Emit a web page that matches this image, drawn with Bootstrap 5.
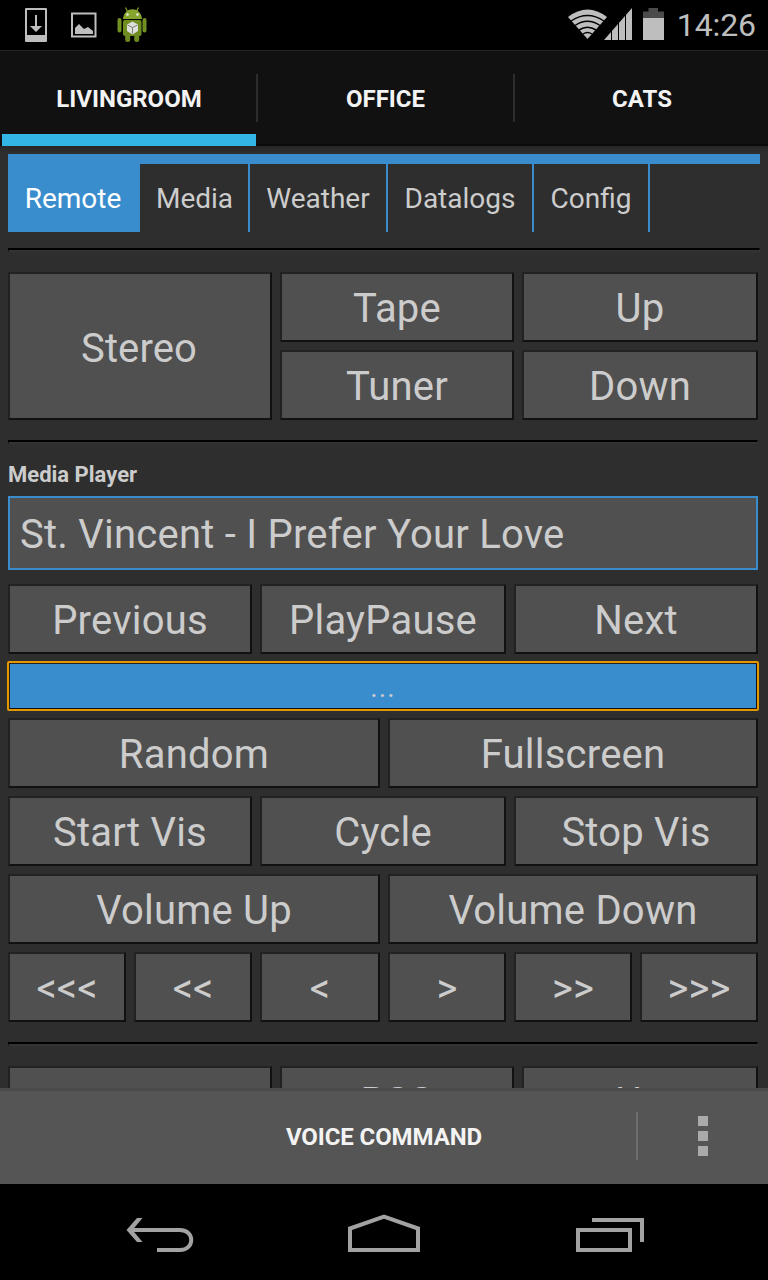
<!DOCTYPE html>
<html lang="en">
<head>
<meta charset="utf-8">
<meta name="viewport" content="width=device-width, initial-scale=1">
<title>Livingroom remote</title>
<link href="https://cdn.jsdelivr.net/npm/bootstrap@5.3.0/dist/css/bootstrap.min.css" rel="stylesheet">
<style>
  body { font-family: Roboto, "Liberation Sans", sans-serif; background: #2e2e2e; color: #ccc; height: 1280px; overflow: hidden; }
  svg { display: block; }
  .statusbar { height: 50px; background: #000; color: #bebebe; }
  .clock { font-size: 32px; line-height: 51px; padding: 0 12px 0 7px; letter-spacing: -.1px; }
  .rooms { height: 96px; background: #111; border-top: 1px solid #242424; border-bottom: 2px solid #0c0c0c; }
  .rooms .nav-link { flex: 0 0 255px; height: 95px; padding: 1px 0 0; line-height: 95px; font-size: 24px; font-weight: 700; color: #f3f3f3; text-align: center; border-radius: 0; }
  .rooms .nav-link.active { flex-basis: 254px; margin-left: 2px; box-shadow: inset 0 -12px #33b5e5; }
  .rooms .nav-link:last-child { flex: 1 1 0; padding-left: 1px; }
  .vline { flex: 0 0 2px; height: 48px; margin-top: 23px; background: #2d2d2d; }
  .page { height: 942px; padding: 8px 10px 0 8px; background: linear-gradient(#262626, #2e2e2e 6px); }
  .pagetabs { height: 78px; margin-right: -2px; border-top: 10px solid #3a8dcd; }
  .pagetabs .nav-link { padding: 1px 0 0; height: 68px; line-height: 67px; font-size: 28px; color: #ccc; text-align: center; border-right: 2px solid #3a8dcd; }
  .pagetabs .nav-link.active { background: #3a8dcd; color: #fff; }
  .rule { height: 4px; border: solid; border-width: 2px 1px 2px 1px; border-color: #000 #333 #333 #000; }
  .pad { display: grid; gap: 8px; margin-bottom: 8px; grid-auto-rows: 70px; }
  .pad-source { grid-template-columns: 264px 234px 236px; }
  .pad-three { grid-template-columns: 244px 246px 244px; }
  .pad-two { grid-template-columns: 372px 370px; }
  .pad-seek { grid-template-columns: 118px 118px 120px 118px 118px 118px; }
  .pad .btn { padding: 3px 0 0; border: 2px solid; border-color: #222 #111 #111 #222; border-radius: 0; background: #505050; color: #ccc; font-size: 40px; line-height: 1; letter-spacing: .22px; }
  .pad-seek .btn { letter-spacing: 0; }
  .pad .tall { grid-row: span 2; padding-top: 5px; padding-right: 2px; letter-spacing: .1px; }
  .heading { font-size: 22px; line-height: 26px; font-weight: 700; }
  .song { height: 74px; border: 2px solid #3a8dcd; background: #505050; font-size: 40px; line-height: 74px; padding-left: 10px; letter-spacing: .24px; }
  .more { height: 48px; margin-bottom: 8px; padding: 0; border: 2px solid; border-color: #222 #111 #111 #222; border-radius: 1px; background: #3a8dcd; color: #ccc; font-size: 28px; line-height: 47px; letter-spacing: 1.2px; outline: 2px solid #e59700; outline-offset: -1px; }
  .actionbar { height: 96px; background: #555; border-top: 3px solid #4a4a4a; color: #f3f3f3; font-size: 24px; font-weight: 700; }
  .sysnav { height: 96px; background: #000; }
</style>
</head>
<body class="d-flex flex-column">
<header class="statusbar d-flex flex-shrink-0">
  <svg width="160" height="50" viewBox="0 0 160 50">
    <path fill="#bebebe" fill-rule="evenodd" d="M26 8h20q1 0 1 1v32q0 1-1 1H26q-1 0-1-1V9q0-1 1-1zm1 2v25h18V10z"/>
    <path fill="#bebebe" d="M35 15h2v11h5l-6 6-6-6h5z"/>
    <path fill="none" stroke="#bebebe" stroke-width="2" d="M72 13.500h23.500v23H72z"/>
    <path fill="#bebebe" d="M75 34v-6l4-4 5 5 4-2 5 4v3z"/>
    <path stroke="#8aa52c" stroke-width="1.200" d="M125.500 7.500l2 4M138.500 7.500l-2 4"/>
    <path fill="#86a52c" d="M123 19c1-13 18-13 19 0z"/>
    <rect x="123" y="20" width="18.500" height="16" rx="2" fill="#708d20"/>
    <path stroke="#718f22" stroke-width="4" stroke-linecap="round" d="M119.500 20v10.500M144.500 20v10.500"/>
    <path stroke="#6d8921" stroke-width="5" stroke-linecap="round" d="M127.700 36v3.500M136.700 36v3.500"/>
    <circle cx="127.500" cy="14.500" r="1.300" fill="#e8e8e8"/><circle cx="137.500" cy="14.500" r="1.300" fill="#e8e8e8"/>
    <path fill="#dedede" d="M132.500 21.500l5.500 3v6.500l-5.500 3.500-5.500-3.500v-6.500z"/>
    <path fill="none" stroke="#76856a" d="M127.500 25l5 2.500 5-2.500M132.500 27.500v6"/>
  </svg>
  <svg class="ms-auto" width="110" height="50" viewBox="560 0 110 50">
    <path fill="#bebebe" d="M568 17q19.500-15 39 0L587.500 39z"/>
    <path fill="none" stroke="#000" stroke-width="1.500" d="M571 21q16.500-11 33 0M575 25.500q12.500-8.500 25 0M579 30q8.500-5.500 17 0M583 34q4.500-3 9 0"/>
    <path fill="#bebebe" d="M604 40l28-32v32z"/>
    <path stroke="#000" d="M611.500 8v32M618.500 8v32M625.500 8v32"/>
    <path fill="#4b4b4b" d="M643 18v-6.500h5.500V8h9.500v3.500h6V18z"/>
    <path fill="#bebebe" d="M643 18h21v22h-21z"/>
  </svg>
  <div class="clock text-nowrap">14:26</div>
</header>

<nav class="rooms nav flex-nowrap flex-shrink-0">
  <a class="nav-link active" href="#">LIVINGROOM</a><span class="vline"></span>
  <a class="nav-link" href="#">OFFICE</a><span class="vline"></span>
  <a class="nav-link" href="#">CATS</a>
</nav>

<main class="page overflow-hidden flex-shrink-0">
  <nav class="pagetabs nav flex-nowrap">
    <a class="nav-link active" style="width:132px" href="#">Remote</a>
    <a class="nav-link" style="width:110px;padding-left:1px" href="#">Media</a>
    <a class="nav-link" style="width:138px" href="#">Weather</a>
    <a class="nav-link" style="width:146px" href="#">Datalogs</a>
    <a class="nav-link" style="width:116px" href="#">Config</a>
  </nav>
  <div class="rule mt-3" style="margin-right:-2px;margin-bottom:20px"></div>
  <div class="pad pad-source" style="margin-bottom:20px">
    <button class="btn tall">Stereo</button><button class="btn">Tape</button><button class="btn">Up</button>
    <button class="btn">Tuner</button><button class="btn">Down</button>
  </div>
  <div class="rule"></div>
  <div class="heading" style="margin:18px 0 8px">Media Player</div>
  <div class="song" style="margin-bottom:14px"><span>St. Vincent - I Prefer Your Love</span></div>
  <div class="pad pad-three">
    <button class="btn">Previous</button><button class="btn">PlayPause</button><button class="btn">Next</button>
  </div>
  <button class="btn more d-block w-100">...</button>
  <div class="pad pad-two">
    <button class="btn">Random</button><button class="btn">Fullscreen</button>
  </div>
  <div class="pad pad-three">
    <button class="btn">Start Vis</button><button class="btn">Cycle</button><button class="btn">Stop Vis</button>
  </div>
  <div class="pad pad-two">
    <button class="btn">Volume Up</button><button class="btn">Volume Down</button>
  </div>
  <div class="pad pad-seek" style="margin-bottom:20px">
    <button class="btn">&lt;&lt;&lt;</button><button class="btn">&lt;&lt;</button><button class="btn">&lt;</button>
    <button class="btn">&gt;</button><button class="btn">&gt;&gt;</button><button class="btn">&gt;&gt;&gt;</button>
  </div>
  <div class="rule" style="margin-bottom:20px"></div>
  <div class="pad pad-source">
    <button class="btn tall"></button><button class="btn">RSS</button><button class="btn">Up</button>
  </div>
</main>

<footer class="actionbar d-flex align-items-center flex-shrink-0">
  <span class="flex-grow-1 text-end" style="padding:0 154px 2px 0;letter-spacing:-.1px">VOICE COMMAND</span>
  <svg width="132" height="93" viewBox="636 1091 132 93">
    <path fill="#6d6d6d" d="M636 1112h2v48h-2z"/>
    <path fill="#aaa" d="M698 1116h10v10h-10zM698 1131h10v10h-10zM698 1146h10v10h-10z"/>
  </svg>
</footer>
<nav class="sysnav flex-shrink-0">
  <svg width="768" height="96" viewBox="0 1184 768 96" fill="none" stroke="#a2a2a2" stroke-width="4">
    <path d="M131 1230h49c15 0 15 20 0 20h-23"/>
    <path fill="#a2a2a2" stroke="none" d="M137 1218h5.500l-10 12 10 12H137l-10.500-12z"/>
    <path d="M350 1250v-21.500l34-12 34 12V1250z"/>
    <path d="M578 1230h52v20h-52zM592 1220h50v22"/>
  </svg>
</nav>
<script src="https://cdn.jsdelivr.net/npm/bootstrap@5.3.0/dist/js/bootstrap.bundle.min.js"></script>
</body>
</html>
